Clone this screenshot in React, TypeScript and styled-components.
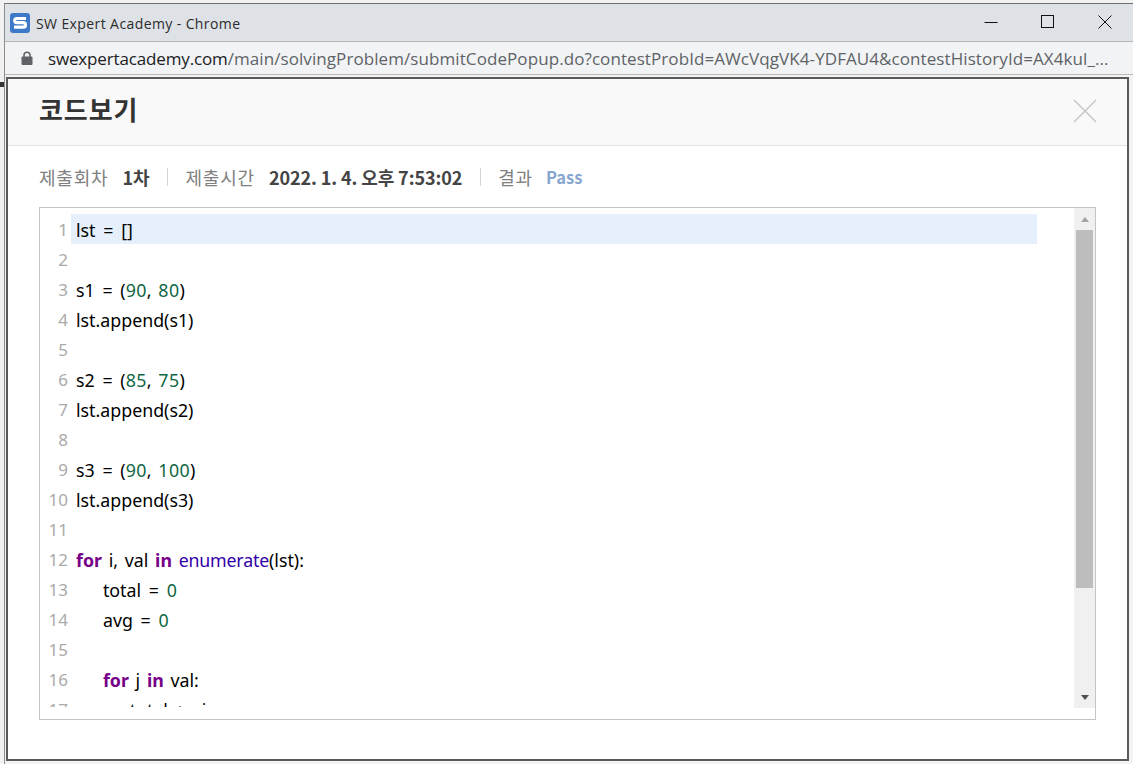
import React from "react";
import styled, { createGlobalStyle } from "styled-components";

const GlobalStyle = createGlobalStyle`
  html, body {
    margin: 0;
    padding: 0;
    background: #f1f1f1;
    overflow: hidden;
  }
`;

const Screen = styled.div`
  position: relative;
  width: 1133px;
  height: 764px;
  padding: 3px 0 0 4px;
  box-sizing: border-box;
  overflow: hidden;
  font-family: "Noto Sans CJK KR", "Noto Sans", sans-serif;
`;

// sliver of the window underneath, sticks out on the left
const BehindMark = styled.div`
  position: absolute;
  left: 0;
  top: 82px;
  width: 4px;
  height: 5px;
  background: #333;
`;

const BrowserWindow = styled.div`
  width: 1129px;
  height: 761px;
  display: flex;
  flex-direction: column;
  box-sizing: border-box;
  border-top: 1px solid #6e7072;
  border-left: 1px solid #8a8c8e;
  background: #f1f3f4;
`;

const TitleBar = styled.div`
  height: 37px;
  flex: none;
  display: flex;
  align-items: center;
  padding-left: 5px;
  background: #dee1e6;
  border-bottom: 1px solid #b4b6b9;
`;

const AppIcon = styled.svg`
  width: 20px;
  height: 20px;
  flex: none;
`;

const WindowTitle = styled.span`
  margin-left: 6px;
  padding-top: 1px;
  font-family: "Open Sans", sans-serif;
  font-size: 14px;
  letter-spacing: 0.4px;
  color: #2b2b2b;
  flex: 1;
`;

const WindowButton = styled.button`
  width: 57px;
  height: 36px;
  border: 0;
  padding: 0 0 2px;
  background: none;
  display: flex;
  align-items: center;
  justify-content: center;
`;

const AddressBar = styled.div`
  height: 33px;
  flex: none;
  display: flex;
  align-items: center;
  padding-left: 16px;
  background: #f1f3f4;
  border-bottom: 1px solid #b9bbbd;
  box-sizing: border-box;
`;

const LockIcon = styled.svg`
  width: 12px;
  height: 14px;
  flex: none;
`;

const Url = styled.span`
  margin-left: 15px;
  font-family: "Open Sans", sans-serif;
  font-size: 17px;
  color: #5f6368;
  white-space: nowrap;
  letter-spacing: 0.08px;
`;

const Host = styled.span`
  color: #202124;
  letter-spacing: -0.15px;
`;

const Popup = styled.div`
  width: 1123px;
  height: 684px;
  margin: 2px 0 0 1px;
  flex: none;
  box-sizing: border-box;
  border: 2px solid #5a5a5a;
  background: #fff;
  display: flex;
  flex-direction: column;
`;

const PopupHeader = styled.div`
  height: 67px;
  flex: none;
  box-sizing: border-box;
  padding: 0 30px 2px 31px;
  display: flex;
  align-items: center;
  justify-content: space-between;
  background: #f9f9f9;
  border-bottom: 1px solid #e3e3e3;
`;

const PopupTitle = styled.h1`
  margin: 0 0 5px;
  font-size: 26px;
  font-weight: 700;
  color: #333;
  letter-spacing: 0.9px;
`;

const CloseIcon = styled.svg`
  width: 24px;
  height: 24px;
`;

const InfoRow = styled.div`
  height: 61px;
  flex: none;
  padding-left: 31px;
  display: flex;
  align-items: center;
  font-size: 18px;
`;

const InfoLabel = styled.span`
  color: #808080;
  font-weight: 400;
  letter-spacing: 0.8px;
`;

const InfoValue = styled.span<{ $pass?: boolean }>`
  margin-left: ${(p) => (p.$pass ? "13px" : "14px")};
  font-family: "Noto Sans CJK KR", "Noto Sans", sans-serif;
  font-weight: 700;
  color: ${(p) => (p.$pass ? "#86a5cf" : "#444")};
  font-size: ${(p) => (p.$pass ? "16.5px" : "18px")};
  letter-spacing: ${(p) => (p.$pass ? "0" : "-0.1px")};
`;

const InfoDivider = styled.i`
  width: 1px;
  height: 18px;
  margin: 0 17px 0 18px;
  background: #d4d4d4;
`;

const EditorFrame = styled.div`
  width: 1057px;
  height: 513px;
  margin-left: 31px;
  box-sizing: border-box;
  border: 1px solid #c4c4c4;
  display: flex;
  align-items: flex-start;
`;

const CodeArea = styled.div`
  flex: 1;
  height: 499px;
  padding-top: 6px;
  box-sizing: border-box;
  overflow: hidden;
  font-family: "Noto Sans", sans-serif;
  font-size: 17.8px;
  word-spacing: 2.1px;
  color: #000;
`;

const CodeLine = styled.div`
  height: 30px;
  line-height: 32px;
  display: flex;
  white-space: pre;
`;

const LineNumber = styled.span`
  width: 28px;
  flex: none;
  text-align: right;
  color: #aaa;
  font-size: 17px;
`;

const LineText = styled.span<{ $active?: boolean }>`
  margin-left: 3px;
  width: 966px;
  padding-left: 5px;
  box-sizing: border-box;
  background: ${(p) => (p.$active ? "#e6f0fc" : "transparent")};
`;

const Keyword = styled.b`
  color: #708;
  font-weight: 700;
`;

const Builtin = styled.span`
  color: #30a;
  letter-spacing: -0.2px;
`;

const NumberToken = styled.span`
  color: #164;
  letter-spacing: 0.4px;
`;

const Operator = styled.span`
  margin: 0 1px;
`;

const Scrollbar = styled.div`
  width: 21px;
  flex: none;
  height: 500px;
  background: #f0f0f0;
  display: flex;
  flex-direction: column;
  align-items: center;
`;

const ScrollButton = styled.div`
  height: 22px;
  flex: none;
  display: flex;
  align-items: center;
  justify-content: center;
`;

const ScrollThumb = styled.div`
  width: 17px;
  height: 358px;
  flex: none;
  background: #bdbdbd;
`;

const ScrollTrack = styled.div`
  flex: 1;
`;

const Arrow = styled.div<{ $down?: boolean }>`
  width: 0;
  height: 0;
  border-left: 4.5px solid transparent;
  border-right: 4.5px solid transparent;
  ${(p) =>
    p.$down
      ? "border-top: 5px solid #505050;"
      : "border-bottom: 5px solid #a3a3a3;"}
`;

const Indent = ({ n }: { n: number }) => <>{"    ".repeat(n)}</>;
const Eq = () => <Operator>=</Operator>;

const lines: React.ReactNode[] = [
  <>lst <Eq /> []</>,
  null,
  <>s1 <Eq /> (<NumberToken>90</NumberToken>, <NumberToken>80</NumberToken>)</>,
  <>lst.append(s1)</>,
  null,
  <>s2 <Eq /> (<NumberToken>85</NumberToken>, <NumberToken>75</NumberToken>)</>,
  <>lst.append(s2)</>,
  null,
  <>s3 <Eq /> (<NumberToken>90</NumberToken>, <NumberToken>100</NumberToken>)</>,
  <>lst.append(s3)</>,
  null,
  <><Keyword>for</Keyword> i, val <Keyword>in</Keyword> <Builtin>enumerate</Builtin>(lst):</>,
  <><Indent n={1} />total <Eq /> <NumberToken>0</NumberToken></>,
  <><Indent n={1} />avg <Eq /> <NumberToken>0</NumberToken></>,
  null,
  <><Indent n={1} /><Keyword>for</Keyword> j <Keyword>in</Keyword> val:</>,
  <><Indent n={2} />total += j</>,
];

export default function App() {
  return (
    <Screen>
      <GlobalStyle />
      <BehindMark />
      <BrowserWindow>
        <TitleBar>
          <AppIcon viewBox="0 0 20 20">
            <rect width="20" height="20" rx="3" fill="#3d78c9" />
            <path d="M16 5.5H6.8a2 2 0 0 0 0 4.2h6.4a2.1 2.1 0 0 1 0 4.5H4" fill="none" stroke="#fff" strokeWidth="3.2" />
          </AppIcon>
          <WindowTitle>SW Expert Academy - Chrome</WindowTitle>
          <WindowButton aria-label="minimize">
            <svg width="14" height="14" viewBox="0 0 14 14"><path d="M0.5 7.5H13.5" stroke="#111" strokeWidth="1" /></svg>
          </WindowButton>
          <WindowButton aria-label="maximize">
            <svg width="14" height="14" viewBox="0 0 14 14"><rect x="0.5" y="0.5" width="12" height="12" fill="none" stroke="#111" /></svg>
          </WindowButton>
          <WindowButton aria-label="close">
            <svg width="14" height="14" viewBox="0 0 14 14"><path d="M0.5 0.5L13.5 13.5M13.5 0.5L0.5 13.5" stroke="#111" /></svg>
          </WindowButton>
        </TitleBar>
        <AddressBar>
          <LockIcon viewBox="0 0 12 14">
            <path d="M3 6V4.2a3 3 0 0 1 6 0V6" fill="none" stroke="#5f6368" strokeWidth="1.5" />
            <rect x="0.5" y="5.5" width="11" height="8.5" rx="1" fill="#5f6368" />
          </LockIcon>
          <Url>
            <Host>swexpertacademy.com</Host>/main/solvingProblem/submitCodePopup.do?contestProbId=AWcVqgVK4-YDFAU4&amp;contestHistoryId=AX4kul_...
          </Url>
        </AddressBar>
        <Popup>
          <PopupHeader>
            <PopupTitle>코드보기</PopupTitle>
            <CloseIcon viewBox="0 0 24 24">
              <path d="M1 1L23 23M23 1L1 23" stroke="#c4c4c4" strokeWidth="1.4" />
            </CloseIcon>
          </PopupHeader>
          <InfoRow>
            <InfoLabel>제출회차</InfoLabel>
            <InfoValue>1차</InfoValue>
            <InfoDivider />
            <InfoLabel>제출시간</InfoLabel>
            <InfoValue>2022. 1. 4. 오후 7:53:02</InfoValue>
            <InfoDivider />
            <InfoLabel>결과</InfoLabel>
            <InfoValue $pass>Pass</InfoValue>
          </InfoRow>
          <EditorFrame>
            <CodeArea>
              {lines.map((line, i) => (
                <CodeLine key={i}>
                  <LineNumber>{i + 1}</LineNumber>
                  <LineText $active={i === 0}>{line}</LineText>
                </CodeLine>
              ))}
            </CodeArea>
            <Scrollbar>
              <ScrollButton><Arrow /></ScrollButton>
              <ScrollThumb />
              <ScrollTrack />
              <ScrollButton><Arrow $down /></ScrollButton>
            </Scrollbar>
          </EditorFrame>
        </Popup>
      </BrowserWindow>
    </Screen>
  );
}
